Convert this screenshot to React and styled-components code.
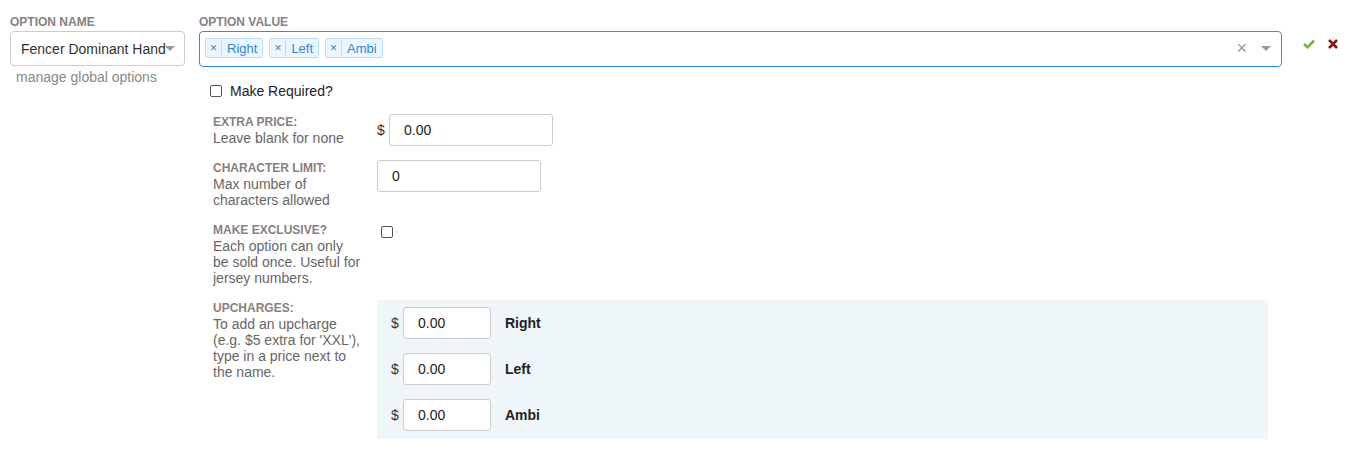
import * as React from "react";
import styled, { createGlobalStyle } from "styled-components";

const GlobalStyle = createGlobalStyle`
  body {
    margin: 0;
    background: #fff;
    font-family: "Liberation Sans", Arial, sans-serif;
    color: #333;
  }
`;

const Page = styled.div`
  display: flex;
  align-items: flex-start;
  padding: 15px 0 0 10px;
`;

const NameCol = styled.div`
  width: 175px;
  flex: none;
  margin-right: 14px;
`;

const ValueCol = styled.div`
  width: 1083px;
  flex: none;
`;

const FieldLabel = styled.div`
  font-size: 12px;
  font-weight: bold;
  line-height: 14px;
  color: #8a7f7f;
  text-transform: uppercase;
  margin-bottom: 2px;
`;

const NameSelect = styled.div`
  height: 35px;
  box-sizing: border-box;
  border: 1px solid #ccc;
  border-radius: 4px;
  display: flex;
  align-items: center;
  padding-left: 10px;
  font-size: 14px;
  color: #333;
  position: relative;
  overflow: hidden;
  white-space: nowrap;
`;

const Caret = styled.span`
  width: 0;
  height: 0;
  border-left: 5px solid transparent;
  border-right: 5px solid transparent;
  border-top: 5px solid #999;
  flex: none;
`;

const NameCaret = styled(Caret)`
  position: absolute;
  right: 9px;
  top: 14px;
`;

const NameText = styled.span`
  background: #fff;
`;

const Helper = styled.div`
  font-size: 14px;
  color: #888;
  padding-left: 6px;
  margin-top: 3px;
`;

const MultiSelect = styled.div`
  height: 36px;
  box-sizing: border-box;
  border: 1px solid #2e8fd8;
  border-radius: 4px;
  display: flex;
  align-items: center;
  padding: 0 10px 2px 5px;
  gap: 6px;
`;

const Tag = styled.div`
  display: flex;
  align-items: stretch;
  height: 20px;
  box-sizing: border-box;
  border: 1px solid rgba(0, 126, 255, 0.22);
  background: rgba(0, 126, 255, 0.07);
  border-radius: 2px;
  color: #2a88d4;
  font-size: 13px;
`;

const TagRemove = styled.span`
  display: flex;
  align-items: center;
  padding: 0 4px;
  border-right: 1px solid rgba(0, 126, 255, 0.22);
  font-size: 12px;
`;

const TagLabel = styled.span`
  display: flex;
  align-items: center;
  padding: 0 5px;
`;

const Spacer = styled.div`
  flex: 1;
`;

const ClearX = styled.span`
  color: #999;
  font-size: 18px;
  line-height: 1;
  margin-right: 8px;
`;

const Actions = styled.div`
  display: flex;
  align-items: center;
  gap: 13px;
  padding: 24px 0 0 21px;
`;

const Checkbox = styled.input.attrs({ type: "checkbox" })`
  appearance: none;
  -webkit-appearance: none;
  width: 12px;
  height: 12px;
  margin: 0;
  border: 1px solid #555;
  border-radius: 2px;
  background: #fff;
  flex: none;
`;

const RequiredRow = styled.label`
  display: flex;
  align-items: center;
  gap: 8px;
  margin: 14px 0 0 11px;
  font-size: 14px;
  color: #222;
  height: 20px;
`;

const Details = styled.div`
  display: flex;
  flex-direction: column;
  gap: 14px;
  margin: 13px 0 0 14px;
`;

const DetailRow = styled.div`
  display: flex;
  align-items: flex-start;
`;

const DetailLabel = styled.div`
  width: 164px;
  flex: none;
  padding-right: 8px;
  box-sizing: border-box;
  line-height: 16px;
`;

const DetailTitle = styled.div`
  font-size: 12px;
  font-weight: bold;
  color: #8a7f7f;
  text-transform: uppercase;
`;

const DetailText = styled.div`
  font-size: 14px;
  color: #666;
  white-space: nowrap;
`;

const Control = styled.div`
  display: flex;
  align-items: center;
  padding-top: ${(p) => p.$top || 0}px;
  padding-left: ${(p) => p.$left || 0}px;
`;

const Dollar = styled.span`
  font-size: 14px;
  color: #333;
  width: 12px;
`;

const TextInput = styled.input`
  width: ${(p) => p.$width || 164}px;
  height: 32px;
  box-sizing: border-box;
  border: 1px solid #ccc;
  border-radius: 3px;
  padding: 0 14px;
  font-family: "Liberation Sans", Arial, sans-serif;
  font-size: 14px;
  color: #222;
  outline: none;
`;

const UpchargePanel = styled.div`
  width: 891px;
  background: #f0f7fb;
  padding: 7px 14px 8px;
  box-sizing: border-box;
  display: flex;
  flex-direction: column;
  gap: 14px;
`;

const UpchargeRow = styled.div`
  display: flex;
  align-items: center;
`;

const UpchargeName = styled.span`
  font-size: 14px;
  font-weight: bold;
  color: #222;
  margin-left: 14px;
`;

const values = ["Right", "Left", "Ambi"];

const details = [
  { title: "Extra Price:", lines: ["Leave blank for none"], control: "price" },
  { title: "Character Limit:", lines: ["Max number of", "characters allowed"], control: "limit" },
  {
    title: "Make Exclusive?",
    lines: ["Each option can only", "be sold once. Useful for", "jersey numbers."],
    control: "check",
  },
];

const upchargeLines = [
  "To add an upcharge",
  "(e.g. $5 extra for 'XXL'),",
  "type in a price next to",
  "the name.",
];

const CheckIcon = () => (
  <svg width="12" height="10" viewBox="0 0 12 10">
    <polyline points="1,5 4.5,8.3 11,1.5" fill="none" stroke="#79b43a" strokeWidth="2.6" />
  </svg>
);

const CrossIcon = () => (
  <svg width="10" height="10" viewBox="0 0 10 10">
    <path d="M1 1 L9 9 M9 1 L1 9" stroke="#8b1414" strokeWidth="2.6" />
  </svg>
);

const renderControl = (kind) => {
  if (kind === "price")
    return (
      <Control>
        <Dollar>$</Dollar>
        <TextInput defaultValue="0.00" />
      </Control>
    );
  if (kind === "limit")
    return (
      <Control>
        <TextInput defaultValue="0" />
      </Control>
    );
  return (
    <Control $top={4} $left={4}>
      <Checkbox />
    </Control>
  );
};

export default function App() {
  return (
    <>
      <GlobalStyle />
      <Page>
        <NameCol>
          <FieldLabel>Option Name</FieldLabel>
          <NameSelect>
            <NameText>Fencer Dominant Hand</NameText>
            <NameCaret />
          </NameSelect>
          <Helper>manage global options</Helper>
        </NameCol>

        <ValueCol>
          <FieldLabel>Option Value</FieldLabel>
          <MultiSelect>
            {values.map((v) => (
              <Tag key={v}>
                <TagRemove>×</TagRemove>
                <TagLabel>{v}</TagLabel>
              </Tag>
            ))}
            <Spacer />
            <ClearX>×</ClearX>
            <Caret />
          </MultiSelect>

          <RequiredRow>
            <Checkbox />
            Make Required?
          </RequiredRow>

          <Details>
            {details.map((d) => (
              <DetailRow key={d.title}>
                <DetailLabel>
                  <DetailTitle>{d.title}</DetailTitle>
                  {d.lines.map((l) => (
                    <DetailText key={l}>{l}</DetailText>
                  ))}
                </DetailLabel>
                {renderControl(d.control)}
              </DetailRow>
            ))}

            <DetailRow>
              <DetailLabel>
                <DetailTitle>Upcharges:</DetailTitle>
                {upchargeLines.map((l) => (
                  <DetailText key={l}>{l}</DetailText>
                ))}
              </DetailLabel>
              <UpchargePanel>
                {values.map((v) => (
                  <UpchargeRow key={v}>
                    <Dollar>$</Dollar>
                    <TextInput $width={88} defaultValue="0.00" />
                    <UpchargeName>{v}</UpchargeName>
                  </UpchargeRow>
                ))}
              </UpchargePanel>
            </DetailRow>
          </Details>
        </ValueCol>

        <Actions>
          <CheckIcon />
          <CrossIcon />
        </Actions>
      </Page>
    </>
  );
}
